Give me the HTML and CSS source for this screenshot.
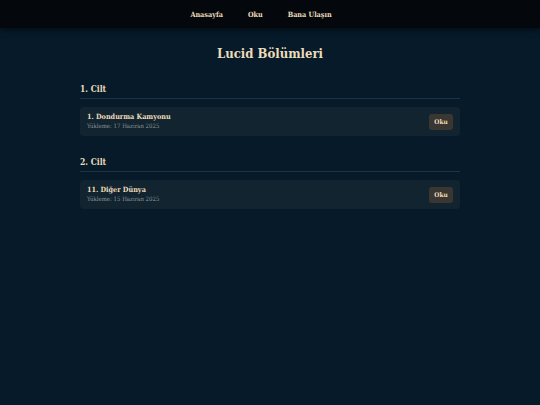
FILE: index.html
```html
<!DOCTYPE html>
<html lang="tr">
<head>
<meta charset="utf-8">
<title>Lucid Bölümleri</title>
<link rel="stylesheet" href="styles.css">
</head>
<body>
<nav class="topbar">
  <a class="nav-link" href="#">Anasayfa</a>
  <a class="nav-link" href="#">Oku</a>
  <a class="nav-link" href="#">Bana Ulaşın</a>
</nav>
<main class="wrap">
  <h1 class="page-title">Lucid Bölümleri</h1>

  <section class="volume">
    <h2 class="volume-title">1. Cilt</h2>
    <div class="chapter">
      <div class="chapter-info">
        <div class="chapter-name">1. Dondurma Kamyonu</div>
        <div class="chapter-date">Yükleme: 17 Haziran 2025</div>
      </div>
      <a class="read-btn" href="#">Oku</a>
    </div>
  </section>

  <section class="volume">
    <h2 class="volume-title">2. Cilt</h2>
    <div class="chapter">
      <div class="chapter-info">
        <div class="chapter-name">11. Diğer Dünya</div>
        <div class="chapter-date">Yükleme: 15 Haziran 2025</div>
      </div>
      <a class="read-btn" href="#">Oku</a>
    </div>
  </section>
</main>
</body>
</html>
```
FILE: styles.css
```css
* {
  box-sizing: border-box;
}

html, body {
  margin: 0;
  padding: 0;
}

body {
  min-height: 100vh;
  background: #061a2a;
  color: #ecdcbb;
  font-family: "DejaVu Serif Condensed", "DejaVu Serif", "Liberation Serif", serif;
  font-stretch: condensed;
}

a {
  color: inherit;
  text-decoration: none;
}

/* top navigation */
.topbar {
  height: 28px;
  display: flex;
  justify-content: center;
  align-items: center;
  gap: 25px;
  padding-right: 18px;
  background: #04080c;
  box-shadow: 0 2px 6px rgba(0, 0, 0, 0.55);
}

.nav-link {
  font-size: 7.2px;
  font-weight: bold;
  color: #ecdcbb;
}

/* content column */
.wrap {
  width: 380px;
  margin: 0 auto;
}

.page-title {
  margin: 17px 0 0;
  font-size: 13px;
  line-height: 18px;
  font-weight: bold;
  text-align: center;
}

.volume {
  margin-top: 20px;
}

.volume-title {
  margin: 0 0 8px;
  padding-bottom: 2px;
  font-size: 8.5px;
  line-height: 13px;
  font-weight: bold;
  border-bottom: 1px solid #1c3344;
}

/* chapter card */
.chapter {
  display: flex;
  align-items: center;
  justify-content: space-between;
  padding: 5px 7px 6px;
  background: #11242f;
  border-radius: 4px;
}

.chapter-name {
  font-size: 7.2px;
  line-height: 10px;
  font-weight: bold;
}

.chapter-date {
  font-size: 6px;
  line-height: 8px;
  color: #8c969b;
}

.read-btn {
  display: flex;
  align-items: center;
  justify-content: center;
  width: 24px;
  height: 16px;
  margin-top: 1px;
  background: #3a3631;
  border-radius: 3px;
  font-size: 6.5px;
  font-weight: bold;
  color: #ecdcbb;
}
```
